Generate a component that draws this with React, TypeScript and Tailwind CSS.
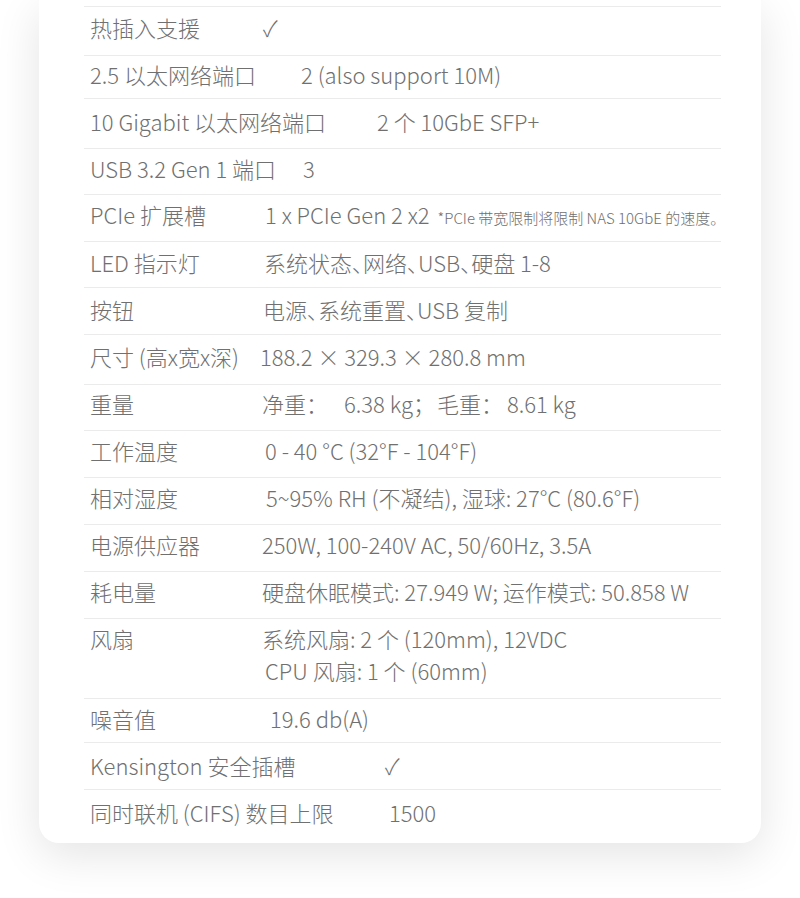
import React from "react";

interface SpecRow {
    label: string;
    value: React.ReactNode;
    h: string;
    pt: string;
    lw: string;
}

const check = <span>✓</span>;

const rows: SpecRow[] = [
    { label: "热插入支援", value: check, h: "h-[49px]", pt: "pt-[4px]", lw: "w-[173px]" },
    { label: "2.5 以太网络端口", value: "2 (also support 10M)", h: "h-[43px]", pt: "pt-[2px]", lw: "w-[211px]" },
    { label: "10 Gigabit 以太网络端口", value: "2 个 10GbE SFP+", h: "h-[50px]", pt: "pt-[6px]", lw: "w-[287px]" },
    { label: "USB 3.2 Gen 1 端口", value: "3", h: "h-[46px]", pt: "pt-[3px]", lw: "w-[213px]" },
    {
        label: "PCIe 扩展槽",
        value: (
            <>
                1 x PCIe Gen 2 x2
                <span className="ml-[8px] text-[15px]">*PCIe 带宽限制将限制 NAS 10GbE 的速度。</span>
            </>
        ),
        h: "h-[47px]",
        pt: "pt-[3px]",
        lw: "w-[175px]",
    },
    {
        label: "LED 指示灯",
        value: <span className="[font-feature-settings:'palt']">系统状态、网络、USB、硬盘 1-8</span>,
        h: "h-[46px]",
        pt: "pt-[4px]",
        lw: "w-[174px]",
    },
    {
        label: "按钮",
        value: <span className="[font-feature-settings:'palt']">电源、系统重置、USB 复制</span>,
        h: "h-[47px]",
        pt: "pt-[5px]",
        lw: "w-[173px]",
    },
    { label: "尺寸 (高x宽x深)", value: "188.2 × 329.3 × 280.8 mm", h: "h-[50px]", pt: "pt-[5px]", lw: "w-[170px]" },
    {
        label: "重量",
        value: (
            <>
                净重：<span className="ml-[16px]">6.38 kg；</span>
                <span className="ml-[2px]">毛重：</span>
                <span className="ml-[4px]">8.61 kg</span>
            </>
        ),
        h: "h-[46px]",
        pt: "pt-[2px]",
        lw: "w-[172px]",
    },
    { label: "工作温度", value: "0 - 40 °C (32°F - 104°F)", h: "h-[47px]", pt: "pt-[3px]", lw: "w-[175px]" },
    { label: "相对湿度", value: "5~95% RH (不凝结), 湿球: 27°C (80.6°F)", h: "h-[47px]", pt: "pt-[3px]", lw: "w-[176px]" },
    { label: "电源供应器", value: "250W, 100-240V AC, 50/60Hz, 3.5A", h: "h-[47px]", pt: "pt-[3px]", lw: "w-[172px]" },
    { label: "耗电量", value: "硬盘休眠模式: 27.949 W; 运作模式: 50.858 W", h: "h-[47px]", pt: "pt-[3px]", lw: "w-[172px]" },
];

const tail: SpecRow[] = [
    { label: "噪音值", value: "19.6 db(A)", h: "h-[44px]", pt: "pt-[3px]", lw: "w-[180px]" },
    { label: "Kensington 安全插槽", value: check, h: "h-[47px]", pt: "pt-[6px]", lw: "w-[295px]" },
    { label: "同时联机 (CIFS) 数目上限", value: "1500", h: "h-[54px]", pt: "pt-[6px]", lw: "w-[299px]" },
];

const Row = ({ row }: { row: SpecRow }) => (
    <div className={`flex items-start border-t border-[#ebebeb] pl-[6px] ${row.h} ${row.pt}`}>
        <div className={`shrink-0 ${row.lw}`}>{row.label}</div>
        <div className="whitespace-nowrap">{row.value}</div>
    </div>
);

export default function App() {
    return (
        <div
            className="min-h-[898px] bg-white px-[39px] pb-[55px] text-[22px] leading-[32px] font-light text-[#707070]"
            style={{
                fontFamily:
                    "'Noto Sans CJK SC Light', 'Noto Sans CJK SC DemiLight', 'Noto Sans CJK SC', sans-serif",
            }}
        >
            <div className="rounded-b-[20px] bg-white pt-[6px] pl-[45px] pr-[40px] shadow-[0_12px_45px_rgba(0,0,0,0.11)]">
                {rows.map((r) => (
                    <Row key={r.label} row={r} />
                ))}
                {/* fan row has two lines */}
                <div className="flex h-[80px] items-start border-t border-[#ebebeb] pt-[3px] pl-[6px]">
                    <div className="w-[172px] shrink-0">风扇</div>
                    <div className="whitespace-nowrap">
                        <div>系统风扇: 2 个 (120mm), 12VDC</div>
                        <div className="pl-[3px]">CPU 风扇: 1 个 (60mm)</div>
                    </div>
                </div>
                {tail.map((r) => (
                    <Row key={r.label} row={r} />
                ))}
            </div>
        </div>
    );
}
